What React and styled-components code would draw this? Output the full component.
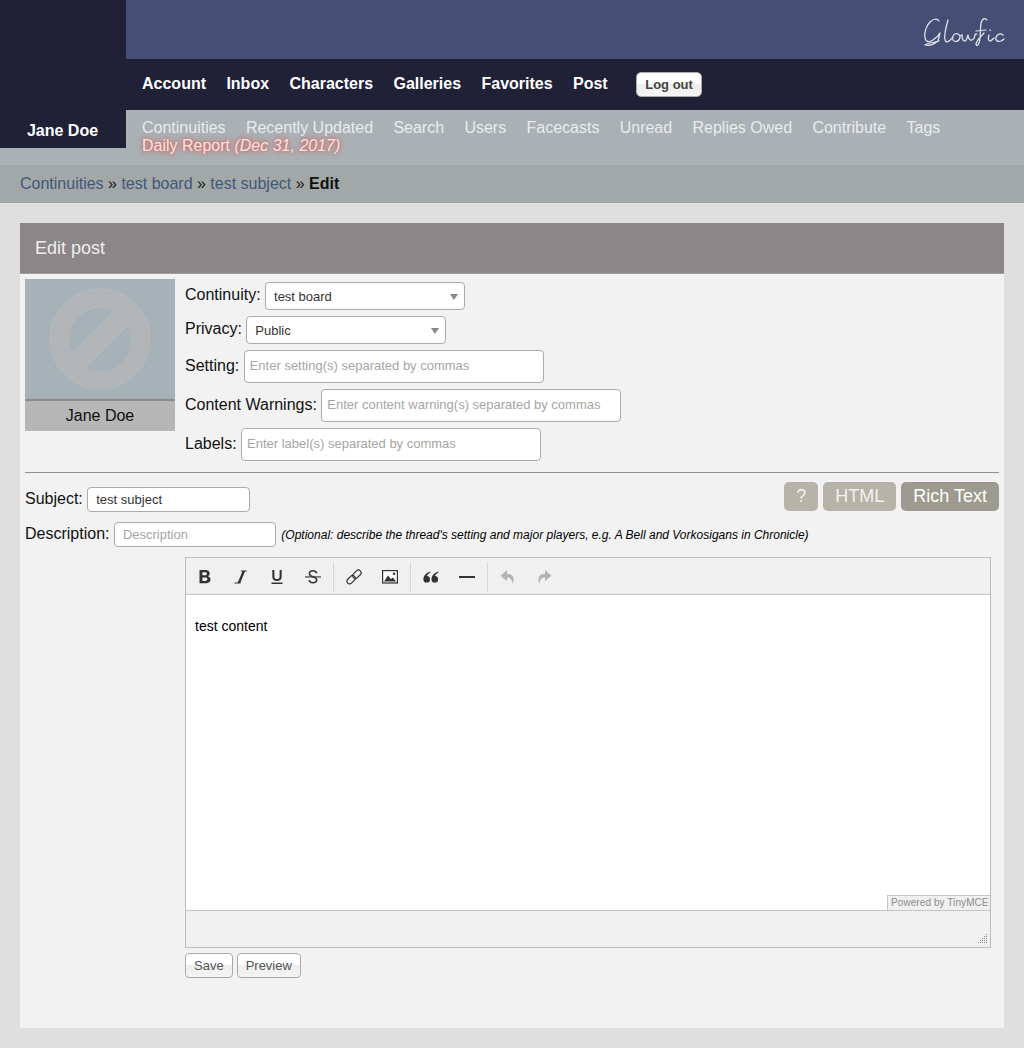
import React from "react";
import styled, { createGlobalStyle } from "styled-components";

const Global = createGlobalStyle`
  html, body { margin: 0; padding: 0; }
  body {
    background: #dfdfdf;
    font-family: "Liberation Sans", Arial, sans-serif;
    font-size: 16px;
    color: #111;
  }
`;

const Header = styled.header`
  display: grid;
  grid-template-columns: 126px 1fr;
  height: 165px;
  background: #aab1b5;
`;

const UserPanel = styled.div`
  display: flex;
  align-items: flex-end;
  justify-content: center;
  height: 148px;
  padding: 0 1px 8px 0;
  box-sizing: border-box;
  background: #202136;
  color: #fff;
  font-weight: bold;
`;

const HeaderMain = styled.div`
  display: flex;
  flex-direction: column;
`;

const Banner = styled.div`
  display: flex;
  justify-content: flex-end;
  height: 59px;
  padding: 10px 9px 0 0;
  box-sizing: border-box;
  background: #454f75;
`;

const MainNav = styled.nav`
  display: flex;
  align-items: center;
  gap: 20.4px;
  height: 51px;
  padding: 0 0 2px 16px;
  box-sizing: border-box;
  background: #202136;
`;

const MainLink = styled.a`
  color: #fff;
  font-weight: bold;
`;

const LogOut = styled.button`
  height: 25px;
  width: 66px;
  margin: 2px 0 0 8px;
  padding: 0;
  border: 1px solid #aaa;
  border-radius: 5px;
  background: linear-gradient(#fff 50%, #eee 50%, #f4f4f4);
  color: #444;
  font: bold 13px "Liberation Sans", Arial, sans-serif;
`;

const SubNav = styled.nav`
  display: flex;
  flex-wrap: wrap;
  column-gap: 20.3px;
  padding: 9px 40px 0 16px;
  line-height: 18px;
`;

const SubLink = styled.a`
  color: #e9ebec;
`;

const DailyReport = styled.a`
  flex-basis: 100%;
  color: #f4e6e4;
  text-shadow: 0 0 6px #e0554c, 0 0 3px #d9665f;
  em { font-style: italic; }
`;

const Breadcrumbs = styled.div`
  display: flex;
  align-items: center;
  gap: 4.45px;
  height: 38px;
  padding: 0 0 1px 20px;
  box-sizing: border-box;
  background: #a2a7a7;
  color: #1c1c1c;
`;

const Crumb = styled.a`
  color: #41597a;
`;

const Current = styled.b`
  color: #111;
`;

const Content = styled.main`
  margin: 20px 20px 20px;
  height: 805px;
  background: #f2f2f2;
`;

const TitleBar = styled.h1`
  display: flex;
  align-items: center;
  height: 51px;
  margin: 0;
  padding: 0 0 0 15px;
  box-sizing: border-box;
  background: #8b8687;
  border-bottom: 1px solid #a09d9e;
  color: #eee;
  font-size: 18px;
  font-weight: normal;
`;

const Form = styled.div`
  padding: 5px 5px 0;
`;

const InfoRow = styled.div`
  display: flex;
  gap: 10px;
`;

const AvatarCard = styled.div`
  display: flex;
  flex-direction: column;
  width: 150px;
  height: 152px;
  background: #b6b6b6;
`;

const AvatarPic = styled.svg`
  display: block;
  flex: none;
  border-bottom: 2px solid #8b8b8b;
  background: #a6b2b8;
`;

const AvatarName = styled.div`
  flex: 1;
  text-align: center;
  line-height: 29px;
`;

const Fields = styled.div`
  display: flex;
  flex-direction: column;
  padding-top: 3px;
  gap: 6px;
`;

const FieldRow = styled.div`
  display: flex;
  align-items: center;
  gap: 4.45px;
`;

const Label = styled.label`
  position: relative;
  top: -1px;
`;

const SelectBox = styled.div`
  display: flex;
  align-items: center;
  justify-content: space-between;
  width: ${(p) => p.$width}px;
  height: 28px;
  padding: 0 6px 0 8px;
  box-sizing: border-box;
  background: #fff;
  border: 1px solid #aaa;
  border-radius: 4px;
  font-size: 13px;
  color: #333;
`;

const Caret = styled.span`
  width: 0;
  height: 0;
  margin-top: 1px;
  border-left: 4.5px solid transparent;
  border-right: 4.5px solid transparent;
  border-top: 6px solid #888;
`;

const TextInput = styled.input`
  width: ${(p) => p.$width}px;
  height: ${(p) => p.$height}px;
  padding: 0 ${(p) => p.$pad}px ${(p) => (p.$height > 30 ? 2 : 0)}px;
  box-sizing: border-box;
  background: #fff;
  border: 1px solid #aaa;
  border-radius: 4px;
  outline: none;
  font: 13px "Liberation Sans", Arial, sans-serif;
  color: #333;
  &::placeholder { color: #a5a5a5; opacity: 1; }
`;

const Rule = styled.hr`
  height: 0;
  margin: 11px 0 9px;
  border: 0;
  border-top: 1px solid #8f8f8f;
`;

const SubjectRow = styled.div`
  display: flex;
  align-items: flex-end;
  justify-content: space-between;
`;

const Toggles = styled.div`
  display: flex;
  gap: 5px;
  margin-bottom: 1px;
`;

const Toggle = styled.button`
  height: 29px;
  padding: 0 12px;
  border: 0;
  border-radius: 5px;
  background: ${(p) => (p.$active ? "#9d9a8f" : "#b6b3a9")};
  color: ${(p) => (p.$active ? "#fff" : "#f2f2f0")};
  font: 18px "Liberation Sans", Arial, sans-serif;
`;

const DescRow = styled(FieldRow)`
  margin-top: 10px;
`;

const Note = styled.em`
  margin-left: 1px;
  font-size: 12px;
  color: #000;
`;

const Editor = styled.div`
  display: flex;
  flex-direction: column;
  position: relative;
  width: 806px;
  height: 391px;
  margin: 10px 0 0 160px;
  box-sizing: border-box;
  border: 1px solid #bcbcbc;
  background: #f0f0f0;
`;

const Toolbar = styled.div`
  display: flex;
  align-items: center;
  height: 36px;
  padding-left: 1px;
  border-bottom: 1px solid #c5c5c5;
  box-sizing: content-box;
`;

const ToolGroup = styled.div`
  display: flex;
  height: 30px;
  margin-top: 2px;
  padding: 0 2px;
  border-right: 1px solid ${(p) => (p.$last ? "transparent" : "#d9d9d9")};
  &:first-child { padding-left: 0; }
`;

const ToolButton = styled.div`
  display: flex;
  align-items: center;
  justify-content: center;
  width: 36px;
  height: 30px;
  color: ${(p) => (p.$disabled ? "#b4b4b4" : "#333")};
  svg { display: block; }
`;

const EditArea = styled.div`
  height: 316px;
  padding: 22px 9px 0;
  box-sizing: border-box;
  background: #fff;
  border-bottom: 1px solid #c5c5c5;
  font-size: 14px;
  line-height: 18px;
  color: #000;
`;

const Powered = styled.div`
  position: absolute;
  right: 0;
  top: 337px;
  width: 103px;
  height: 15px;
  box-sizing: border-box;
  padding-left: 3px;
  background: #f0f0f0;
  border: 1px solid #c5c5c5;
  border-width: 1px 0 0 1px;
  font: 10px/13px "Liberation Sans", Arial, sans-serif;
  letter-spacing: 0.08px;
  color: #8d8d8d;
  white-space: nowrap;
`;

const StatusBar = styled.div`
  flex: 1;
  display: flex;
  align-items: flex-end;
  justify-content: flex-end;
  padding: 0 2px 3px 0;
`;

const Actions = styled.div`
  display: flex;
  gap: 4px;
  margin: 5px 0 0 160px;
`;

const ActionButton = styled.button`
  height: 25px;
  padding: 0 8px;
  border: 1px solid #aaa;
  border-radius: 4px;
  background: linear-gradient(#fff 50%, #eee 50%, #f4f4f4);
  color: #555;
  font: 13px "Liberation Sans", Arial, sans-serif;
`;

const LogoMark = () => (
  <svg width="100" height="42" viewBox="0 0 100 42" role="img" aria-label="Glowfic" fill="none" stroke="#e4e6ee" strokeWidth="1.25" strokeLinecap="round" strokeLinejoin="round">
    <path d="M24 11 C22 8 18 9 15 12 C11 16 9 23 10 28 C11 33 15 32 18 30 C21 28 24 25 25 23 L23 31 C18 35 13 36 10 35 C12 33 18 33 24 31" />
    <path d="M33 10 C31 17 29 26 30 30 C31 33 34 32 37 28" />
    <path d="M41 23.5 C38 24 37 28 38 30 C40 33 45 31 45 27 C45 25 43 23.5 41 23.5 M45 26 L47 25" />
    <path d="M47 25 C47 28 48 31 50 31 C52 31 52 27 53 25 C53 28 55 31 57 30 C59 29 60 26 60 24 L62 24" />
    <path d="M72 10 C70 7 67 9 66 13 C65 19 66 27 64 33 C63 36 61 36 61 34 C62 30 67 25 69 23 M61 21 L71 20" />
    <path d="M74 25 C73 28 73 31 75 31 C76 31 77 30 79 28" />
    <path d="M75 20 L75.3 20.4" />
    <path d="M88 25 C86 23 82 24 81 27 C80 31 83 32 86 31 C87 30.6 88 30 89 29" />
  </svg>
);

const BlockedAvatar = () => (
  <AvatarPic width="150" height="120" viewBox="0 0 150 120" role="img" aria-label="Jane Doe avatar">
    <path
      fillRule="evenodd"
      fill="#b1b5b8"
      stroke="#c9cccf"
      strokeWidth="0.6"
      strokeDasharray="1 1"
      d="M25 60 a50 50 0 1 0 100 0 a50 50 0 1 0 -100 0 Z M46.7 74.3 L90 31.7 A32 32 0 0 0 46.7 74.3 Z M60 89.3 L103.3 46 A32 32 0 0 1 60 89.3 Z"
    />
  </AvatarPic>
);

const Icon = ({ children }) => (
  <svg width="16" height="16" viewBox="0 0 16 16" fill="currentColor">
    {children}
  </svg>
);

const tools = [
  [
    { name: "bold", draw: <path fillRule="evenodd" d="M2.5 1h6c2.7 0 4.2 1.3 4.2 3.4 0 1.3-.7 2.3-1.8 2.8 1.6.4 2.6 1.6 2.6 3.3 0 2.4-1.9 3.7-4.7 3.7H2.5z M5.4 3.2v3.1h2.7c1.1 0 1.7-.5 1.7-1.6s-.6-1.5-1.7-1.5z M5.4 8.4v3.5h3c1.3 0 2-.6 2-1.8s-.7-1.7-2-1.7z" /> },
    { name: "italic", draw: <path d="M8 1.5 H14 L13.7 2.6 H12 L7.4 13.5 H4.8 L9.4 2.6 H7.7z M1.8 13.5 H7.8 L7.5 14.6 H1.5z" /> },
    { name: "underline", draw: <path d="M3.3 1h2.1v6.8c0 1.5.9 2.3 2.6 2.3s2.6-.8 2.6-2.3V1h2.1v6.8c0 2.8-1.8 4.2-4.7 4.2S3.3 10.6 3.3 7.8z M2.5 13.6h11v1.5h-11z" /> },
    { name: "strike", draw: <g><path fill="none" stroke="currentColor" strokeWidth="1.6" d="M11.8 4.2C11.2 2.7 9.8 1.8 8 1.8 5.9 1.8 4.4 3 4.4 4.7c0 3.6 7.3 2.3 7.3 6.1 0 1.8-1.7 3-3.7 3-2 0-3.4-1-4-2.5" /><rect x="0" y="7.4" width="16" height="1.1" /></g> },
  ],
  [
    { name: "link", draw: <g fill="none" stroke="currentColor" strokeWidth="1.2"><rect x="0.3" y="8" width="9.6" height="5.4" rx="2.7" transform="rotate(-45 5.1 10.7)" /><rect x="6.1" y="2.6" width="9.6" height="5.4" rx="2.7" transform="rotate(-45 10.9 5.3)" /></g> },
    { name: "image", draw: <g><rect x="0.6" y="1.6" width="14.8" height="12.4" fill="#fafafa" stroke="currentColor" strokeWidth="1.2" /><path d="M2 12.6 L6 6.4 L9 10 L11 8.4 L14 12.6z" /><circle cx="12" cy="4.8" r="1.2" /></g> },
  ],
  [
    { name: "quote", draw: <g><path d="M7.5 2.6C4 3.6 .4 6.4 .4 10.2a3.3 3.3 0 1 0 3.4-3.2C4.4 5.4 6 4 7.5 3.4z" /><path d="M15.6 2.6C12 3.6 8.5 6.4 8.5 10.2a3.3 3.3 0 1 0 3.4-3.2c.6-1.6 2.2-3 3.7-3.6z" /></g> },
    { name: "hr", draw: <rect x="0" y="7" width="16" height="2" /> },
  ],
  [
    { name: "undo", off: true, draw: <path d="M7 1 L.5 6.8 L7 12 V8.6 C10 8.6 12 10.2 12.6 15 C15 9.6 13 4.7 7 4.7z" /> },
    { name: "redo", off: true, draw: <path d="M9 1 L15.5 6.8 L9 12 V8.6 C6 8.6 4 10.2 3.4 15 C1 9.6 3 4.7 9 4.7z" /> },
  ],
];

const mainLinks = ["Account", "Inbox", "Characters", "Galleries", "Favorites", "Post"];
const subLinks = ["Continuities", "Recently Updated", "Search", "Users", "Facecasts", "Unread", "Replies Owed", "Contribute", "Tags"];

export default function App() {
  return (
    <>
      <Global />
      <Header>
        <UserPanel>Jane Doe</UserPanel>
        <HeaderMain>
          <Banner>
            <LogoMark />
          </Banner>
          <MainNav>
            {mainLinks.map((l) => (
              <MainLink key={l}>{l}</MainLink>
            ))}
            <LogOut>Log out</LogOut>
          </MainNav>
          <SubNav>
            {subLinks.map((l) => (
              <SubLink key={l}>{l}</SubLink>
            ))}
            <DailyReport>
              Daily Report <em>(Dec 31, 2017)</em>
            </DailyReport>
          </SubNav>
        </HeaderMain>
      </Header>

      <Breadcrumbs>
        <Crumb>Continuities</Crumb>»<Crumb>test board</Crumb>»<Crumb>test subject</Crumb>»<Current>Edit</Current>
      </Breadcrumbs>

      <Content>
        <TitleBar>Edit post</TitleBar>
        <Form>
          <InfoRow>
            <AvatarCard>
              <BlockedAvatar />
              <AvatarName>Jane Doe</AvatarName>
            </AvatarCard>
            <Fields>
              <FieldRow>
                <Label>Continuity:</Label>
                <SelectBox $width={200}>
                  test board
                  <Caret />
                </SelectBox>
              </FieldRow>
              <FieldRow>
                <Label>Privacy:</Label>
                <SelectBox $width={200}>
                  Public
                  <Caret />
                </SelectBox>
              </FieldRow>
              <FieldRow>
                <Label>Setting:</Label>
                <TextInput $width={300} $height={33} $pad={5} placeholder="Enter setting(s) separated by commas" />
              </FieldRow>
              <FieldRow>
                <Label>Content Warnings:</Label>
                <TextInput $width={300} $height={33} $pad={5} placeholder="Enter content warning(s) separated by commas" />
              </FieldRow>
              <FieldRow>
                <Label>Labels:</Label>
                <TextInput $width={300} $height={33} $pad={5} placeholder="Enter label(s) separated by commas" />
              </FieldRow>
            </Fields>
          </InfoRow>

          <Rule />

          <SubjectRow>
            <FieldRow>
              <Label>Subject:</Label>
              <TextInput $width={163} $height={25} $pad={8} defaultValue="test subject" />
            </FieldRow>
            <Toggles>
              <Toggle>?</Toggle>
              <Toggle>HTML</Toggle>
              <Toggle $active>Rich Text</Toggle>
            </Toggles>
          </SubjectRow>

          <DescRow>
            <Label>Description:</Label>
            <TextInput $width={162} $height={25} $pad={8} placeholder="Description" />
            <Note>(Optional: describe the thread's setting and major players, e.g. A Bell and Vorkosigans in Chronicle)</Note>
          </DescRow>

          <Editor>
            <Toolbar>
              {tools.map((group, i) => (
                <ToolGroup key={i} $last={i === tools.length - 1}>
                  {group.map((t) => (
                    <ToolButton key={t.name} $disabled={t.off} title={t.name}>
                      <Icon>{t.draw}</Icon>
                    </ToolButton>
                  ))}
                </ToolGroup>
              ))}
            </Toolbar>
            <EditArea>test content</EditArea>
            <Powered>Powered by TinyMCE</Powered>
            <StatusBar>
              <svg width="10" height="10" viewBox="0 0 10 10" fill="#888">
                {[[8, 0], [6, 2], [8, 2], [4, 4], [6, 4], [8, 4], [2, 6], [4, 6], [6, 6], [8, 6], [0, 8], [2, 8], [4, 8], [6, 8], [8, 8]].map(([x, y]) => (
                  <rect key={`${x}-${y}`} x={x} y={y} width="1" height="1" />
                ))}
              </svg>
            </StatusBar>
          </Editor>

          <Actions>
            <ActionButton>Save</ActionButton>
            <ActionButton>Preview</ActionButton>
          </Actions>
        </Form>
      </Content>
    </>
  );
}
